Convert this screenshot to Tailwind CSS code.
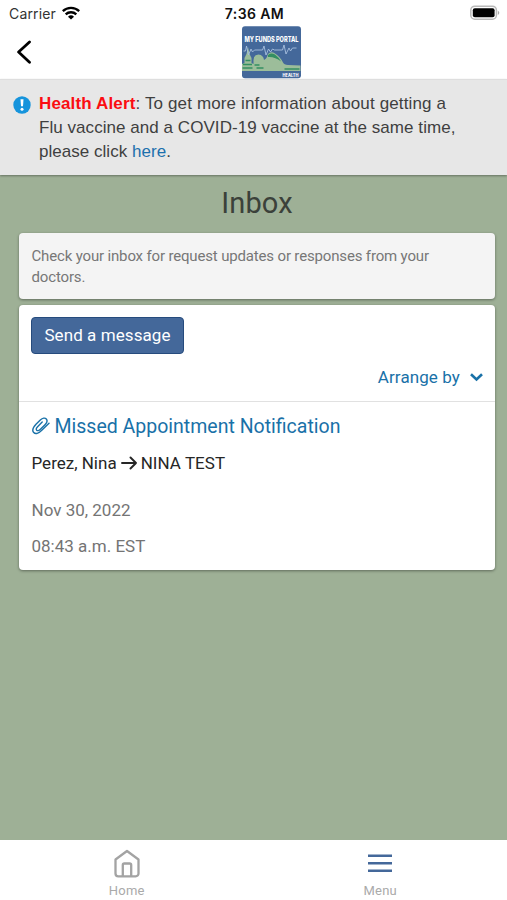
<!DOCTYPE html>
<html lang="en">
<head>
  <meta charset="UTF-8">
  <meta name="viewport" content="width=device-width, initial-scale=1.0">
  <title>Inbox</title>
  <script src="https://cdn.jsdelivr.net/npm/@tailwindcss/browser@4"></script>
</head>
<body class="bg-[#9eb096] h-screen flex flex-col overflow-hidden font-['Roboto',sans-serif]">
  <!-- Status bar -->
  <div class="h-7 shrink-0 bg-white grid grid-cols-3 items-center pl-[9px] pr-[7px] font-['Inter',sans-serif]">
    <div class="flex items-center gap-[6px] text-sm text-[#333]">
      <span class="tracking-[0.15px]">Carrier</span>
      <svg class="w-[18px] h-[14px] -mt-[2px]" viewBox="0 0 18 14" fill="none" stroke="#000" stroke-width="2.3">
        <path d="M.8 5.2a11.8 11.8 0 0 1 16.4 0"/>
        <path d="M3.7 8.4a7.6 7.6 0 0 1 10.6 0"/>
        <path d="M9 13.6 6 10.8a4.3 4.3 0 0 1 6 0Z" fill="#000" stroke="none"/>
      </svg>
    </div>
    <div class="text-center text-sm font-semibold text-[#111] whitespace-nowrap tracking-[0.4px]">7:36 AM</div>
    <svg class="justify-self-end w-[30px] h-[16px] -mt-[2px]" viewBox="0 0 30 16">
      <rect x=".8" y="1.2" width="25.6" height="13" rx="4" fill="#fff" stroke="#b9b9b9" stroke-width="1.5"/>
      <rect x="2.8" y="3.2" width="21.8" height="9" rx="2" fill="#000"/>
      <path d="M27.8 5.4q3 2.3 0 4.6Z" fill="#aaa"/>
    </svg>
  </div>

  <!-- Header -->
  <header class="h-[51px] shrink-0 bg-white grid grid-cols-3 pl-4 pr-4">
    <svg class="w-4 h-6 mt-3" viewBox="0 0 16 24" fill="none" stroke="#000" stroke-width="2.8" stroke-linecap="round" stroke-linejoin="round">
      <path d="M13.5 2 2.6 12l10.9 10.3"/>
    </svg>
    <svg class="w-[60px] h-[53px] -mt-[2px] justify-self-center translate-x-[18.5px]" viewBox="0 0 60 53">
      <rect x=".5" y=".3" width="59" height="52" rx="3" fill="#44689a"/>
      <!-- skyline and hills -->
      <path d="M.5 45v-7L3 37v-5l2-4 1.500-7L8 28l2 4v5l2 1v-4q0-5 5-5.500 5 .5 5.500 5.500 2-1 3-3l1-3q3-3 7-.5 5 3 8 9 1 2 5 2.500l12.500.5V45Z" fill="#9cbd9a"/>
      <path d="M26.500 29q3-2.500 7-.5 4 3 6 7-6-5-13-4.500Z" fill="#338f62"/>
      <path d="M1.500 38.500h9M1 42h10M4 34.500h5M13 39h5M15 42h7M43 43h15" fill="none" stroke="#338f62" stroke-width="1.500"/>
      <path d="M2 25h2l1-5 2 9 2.500-6 1.500 3 2-2h8l1.500-4 2 9 2.500-6 2 3 2-3 2 1h8l1.500-5 2 9 3-6 1.500 3 2-3h4" fill="none" stroke="#a9c1df" stroke-width=".9"/>
      <text x="3" y="16" textLength="54" lengthAdjust="spacingAndGlyphs" font-size="7" font-weight="800" fill="#fff" font-family="Inter, sans-serif">MY FUNDS PORTAL</text>
      <text x="41" y="51" textLength="16" lengthAdjust="spacingAndGlyphs" font-size="4.300" font-weight="800" fill="#fff" font-family="Inter, sans-serif">HEALTH</text>
    </svg>
  </header>

  <!-- Alert -->
  <section class="h-[96px] shrink-0 bg-[#e7e7e7] border-t border-[#dedede] shadow-[0_1px_2px_rgba(0,0,0,0.35)] flex pl-[13px] pt-3 gap-2 font-['Liberation_Sans',sans-serif] text-[17px] leading-[24px] text-[#3f3f3f]">
    <svg class="w-[18px] h-[18px] mt-[4px] shrink-0" viewBox="0 0 18 18">
      <circle cx="9" cy="9" r="8.700" fill="#1694dc"/>
      <path d="M7.500 3.200h3l-.5 7.100H8Z" fill="#fff"/>
      <circle cx="9" cy="13.300" r="1.500" fill="#fff"/>
    </svg>
    <p class="whitespace-nowrap">
      <span class="block tracking-[0.14px]"><b class="text-[#fb0d12]">Health Alert</b>: To get more information about getting a</span>
      <span class="block tracking-[0.05px]">Flu vaccine and a COVID-19 vaccine at the same time,</span>
      <span class="block tracking-[0.03px]">please click <a href="#" class="text-[#1c70ad]">here</a>.</span>
    </p>
  </section>

  <main class="flex-1 pl-[19px] pr-3">
    <h1 class="mt-[10px] text-center text-[29px] leading-[36px] text-[#3b413a] tracking-[0.1px]">Inbox</h1>

    <div class="mt-[12px] h-[66px] rounded-[4px] bg-[#f4f4f4] shadow-[0_1px_3px_rgba(0,0,0,0.4)] px-[12.5px] pt-[13px] text-[15px] leading-[21px] text-[#777]">
      <p class="tracking-[-0.16px] whitespace-nowrap">Check your inbox for request updates or responses from your<br>doctors.</p>
    </div>

    <div class="mt-[6px] h-[265px] rounded-[4px] bg-white shadow-[0_1px_3px_rgba(0,0,0,0.4)]">
      <div class="h-[97px] border-b border-[#e1e1e1] px-3 pt-3">
        <button class="block w-[153px] h-[37px] rounded-[4px] border border-[#264b7d] bg-[#44689a] text-white text-[17px] tracking-[0.08px]">Send a message</button>
        <div class="mt-[11px] flex justify-end items-center gap-[10px] text-[17px] leading-6 text-[#1971a8]">
          <span class="tracking-[0.1px]">Arrange by</span>
          <svg class="w-[13px] h-[9px]" viewBox="0 0 13 9" fill="none" stroke="currentColor" stroke-width="2.600"><path d="m1 1.300 5.500 5.200L12 1.300"/></svg>
        </div>
      </div>
      <div class="px-[12.5px] pt-[13px] text-[17px] text-[#262626]">
        <a href="#" class="flex items-center gap-[5px] text-[19.5px] leading-6 text-[#1971a8]">
          <svg class="w-[18px] h-[18px] -mt-[2px]" viewBox="0 0 18 18" fill="none" stroke="currentColor" stroke-width="1.400" stroke-linecap="round" stroke-linejoin="round">
            <path d="M17 6.300 9.800 13.300C6.500 16.600 3.500 17.500 1.700 15.500S.8 10.700 4 7.300L8.300 3c2.300-2.200 4.800-2.400 6-1 1.300 1.500.8 3.600-1.300 5.700l-4.600 4.600c-1.500 1.500-2.900 1.700-3.700.9-.8-.9-.4-2.200.9-3.500l4.600-4.600"/>
          </svg>
          <span>Missed Appointment Notification</span>
        </a>
        <div class="mt-3 flex items-center gap-1 leading-6">
          <span>Perez, Nina</span>
          <svg class="w-4 h-[14px]" viewBox="0 0 16 14" fill="none" stroke="currentColor" stroke-width="1.900" stroke-linecap="round" stroke-linejoin="round"><path d="M1 7h14M9.500 1.500 15 7l-5.500 5.500"/></svg>
          <span class="tracking-[0.05px]">NINA TEST</span>
        </div>
        <p class="mt-[23px] leading-6 text-[#747474]">Nov 30, 2022</p>
        <p class="mt-3 leading-6 text-[#747474]">08:43 a.m. EST</p>
      </div>
    </div>
  </main>

  <!-- Bottom tabs -->
  <nav class="h-[60px] shrink-0 bg-white grid grid-cols-2 text-[13px] leading-4 text-[#aaa] tracking-[0.2px]">
    <a href="#" class="flex flex-col items-center pt-[9px]">
      <svg class="w-[28px] h-[30px]" viewBox="0 0 28 30" fill="none" stroke="#a3a3a3" stroke-width="2.300" stroke-linejoin="round">
        <path d="M2.500 10.500 14 2l11.500 8.500v14a2.800 2.800 0 0 1-2.800 2.800H5.300a2.800 2.800 0 0 1-2.800-2.800Z"/>
        <path d="M9.800 27V16a1.500 1.500 0 0 1 1.500-1.500h5.400a1.500 1.500 0 0 1 1.500 1.500v11"/>
      </svg>
      <span class="mt-1">Home</span>
    </a>
    <a href="#" class="flex flex-col items-center pt-[9px]">
      <svg class="w-[28px] h-[30px]" viewBox="0 0 28 30" fill="none" stroke="#44689a" stroke-width="2.400">
        <path d="M2 6.800h24M2 14.300h24M2 21.800h24"/>
      </svg>
      <span class="mt-1">Menu</span>
    </a>
  </nav>
</body>
</html>
